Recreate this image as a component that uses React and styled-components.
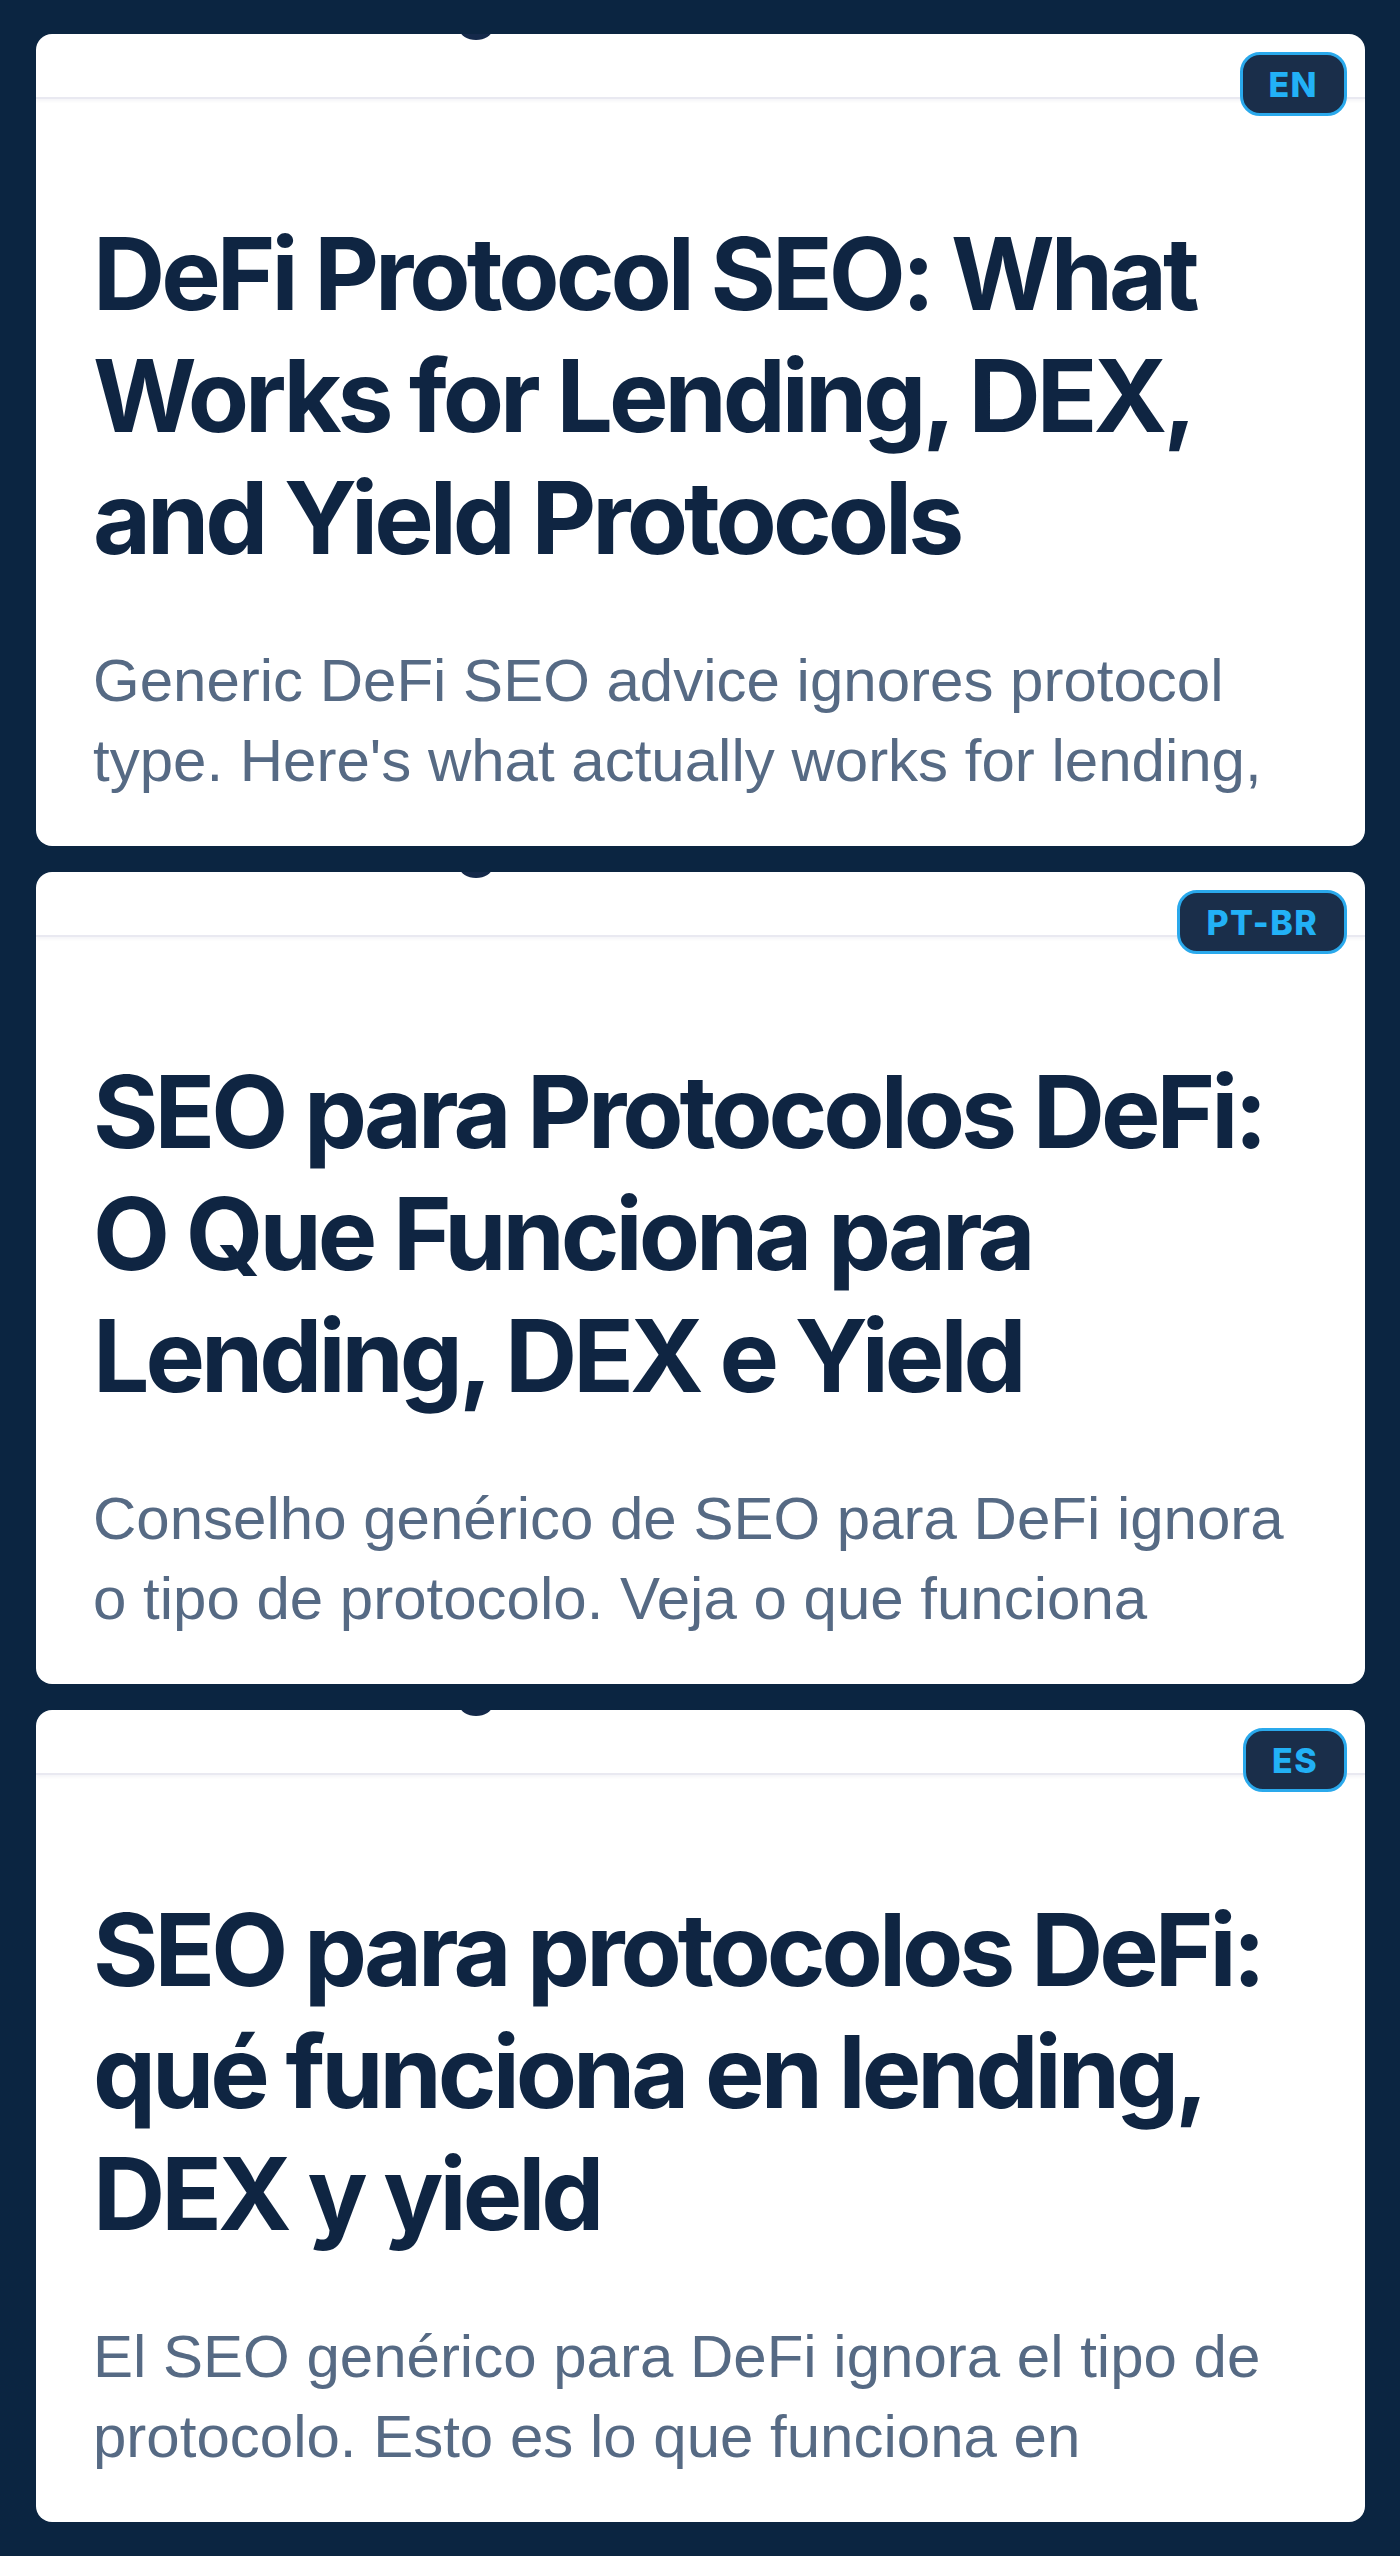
import React from 'react'
import styled, { createGlobalStyle } from 'styled-components'

const GlobalStyle = createGlobalStyle`
  html, body {
    margin: 0;
    padding: 0;
    background: #0b2541;
  }
  * { box-sizing: border-box; }
`;

// only the part of each excerpt that shows in the card
const posts = [
  {
    lang: 'EN',
    title: 'DeFi Protocol SEO: What Works for Lending, DEX, and Yield Protocols',
    excerpt: "Generic DeFi SEO advice ignores protocol type. Here's what actually works for lending,",
  },
  {
    lang: 'PT-BR',
    title: 'SEO para Protocolos DeFi: O Que Funciona para Lending, DEX e Yield',
    excerpt: 'Conselho genérico de SEO para DeFi ignora o tipo de protocolo. Veja o que funciona',
  },
  {
    lang: 'ES',
    title: 'SEO para protocolos DeFi: qué funciona en lending, DEX y yield',
    excerpt: 'El SEO genérico para DeFi ignora el tipo de protocolo. Esto es lo que funciona en',
  },
];

function App() {
  return (
    <Page>
      <GlobalStyle />
      {posts.map((p) => (
        <Card key={p.lang}>
          <Notch />
          <Header>
            <Badge>{p.lang}</Badge>
          </Header>
          <Body>
            <Title>{p.title}</Title>
            <Excerpt>{p.excerpt}</Excerpt>
          </Body>
        </Card>
      ))}
    </Page>
  )
}
export default App;

const Page = styled.div`
  display: flex;
  flex-direction: column;
  gap: 26px;
  padding: 34px 35px 35px 36px;
  min-height: 2556px;
  background: #0b2541;
`;

const Card = styled.article`
  position: relative;
  display: flex;
  flex-direction: column;
  height: 812px;
  background: #ffffff;
  border-radius: 16px;
  overflow: hidden;
`;

const Notch = styled.span`
  position: absolute;
  top: -14px;
  left: 424px;
  width: 32px;
  height: 20px;
  border-radius: 50%;
  background: #14294a;
`;

const Header = styled.div`
  position: relative;
  height: 65px;
  flex-shrink: 0;
  border-bottom: 2px solid #e9e9f1;
  box-shadow: 0 2px 3px rgba(30, 40, 90, 0.05);
`;

const Badge = styled.span`
  position: absolute;
  top: 18px;
  right: 18px;
  display: inline-flex;
  align-items: center;
  justify-content: center;
  height: 64px;
  padding: 0 26px;
  border: 3px solid #2aa9ec;
  border-radius: 20px;
  background: #1a2e4a;
  color: #22b1f6;
  font-family: Inter, "Liberation Sans", sans-serif;
  font-weight: 800;
  font-size: 34px;
  letter-spacing: 0.04em;
  z-index: 1;
`;

const Body = styled.div`
  padding: 114px 57px 44px 57px;
`;

const Title = styled.h2`
  margin: 0;
  font-family: Inter, "Liberation Sans", sans-serif;
  font-weight: 700;
  font-size: 100px;
  line-height: 122px;
  letter-spacing: -0.04em;
  color: #0f2542;
`;

const Excerpt = styled.p`
  margin: 62px 0 0;
  font-family: "Liberation Sans", Arial, sans-serif;
  font-size: 60px;
  line-height: 80px;
  color: #566a84;
`;
